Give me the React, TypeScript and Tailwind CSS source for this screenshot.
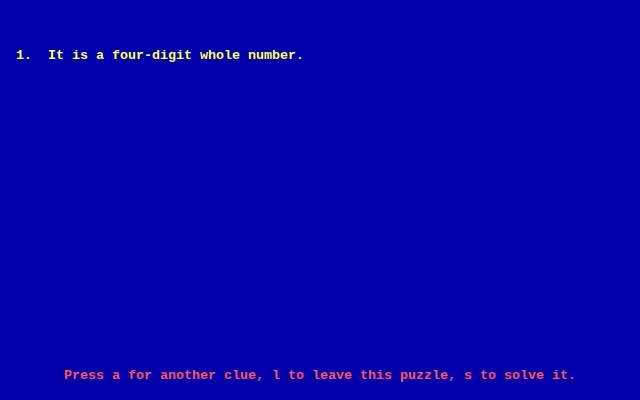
export default function App() {
  return (
    <div
      className="w-[640px] h-[400px] bg-[#0000aa] flex flex-col justify-between pt-[48px] pb-[16px] overflow-hidden"
      style={{ fontFamily: '"Liberation Mono", "DejaVu Sans Mono", monospace' }}
    >
      <div className="pl-[16px] h-[16px] leading-[16px] text-[13.333px] font-bold text-[#ffff55] whitespace-pre">
        {"1.  It is a four-digit whole number."}
      </div>
      <div className="pl-[64px] h-[16px] leading-[16px] text-[13.333px] font-bold text-[#ff5555] whitespace-pre">
        {"Press a for another clue, l to leave this puzzle, s to solve it."}
      </div>
    </div>
  );
}
